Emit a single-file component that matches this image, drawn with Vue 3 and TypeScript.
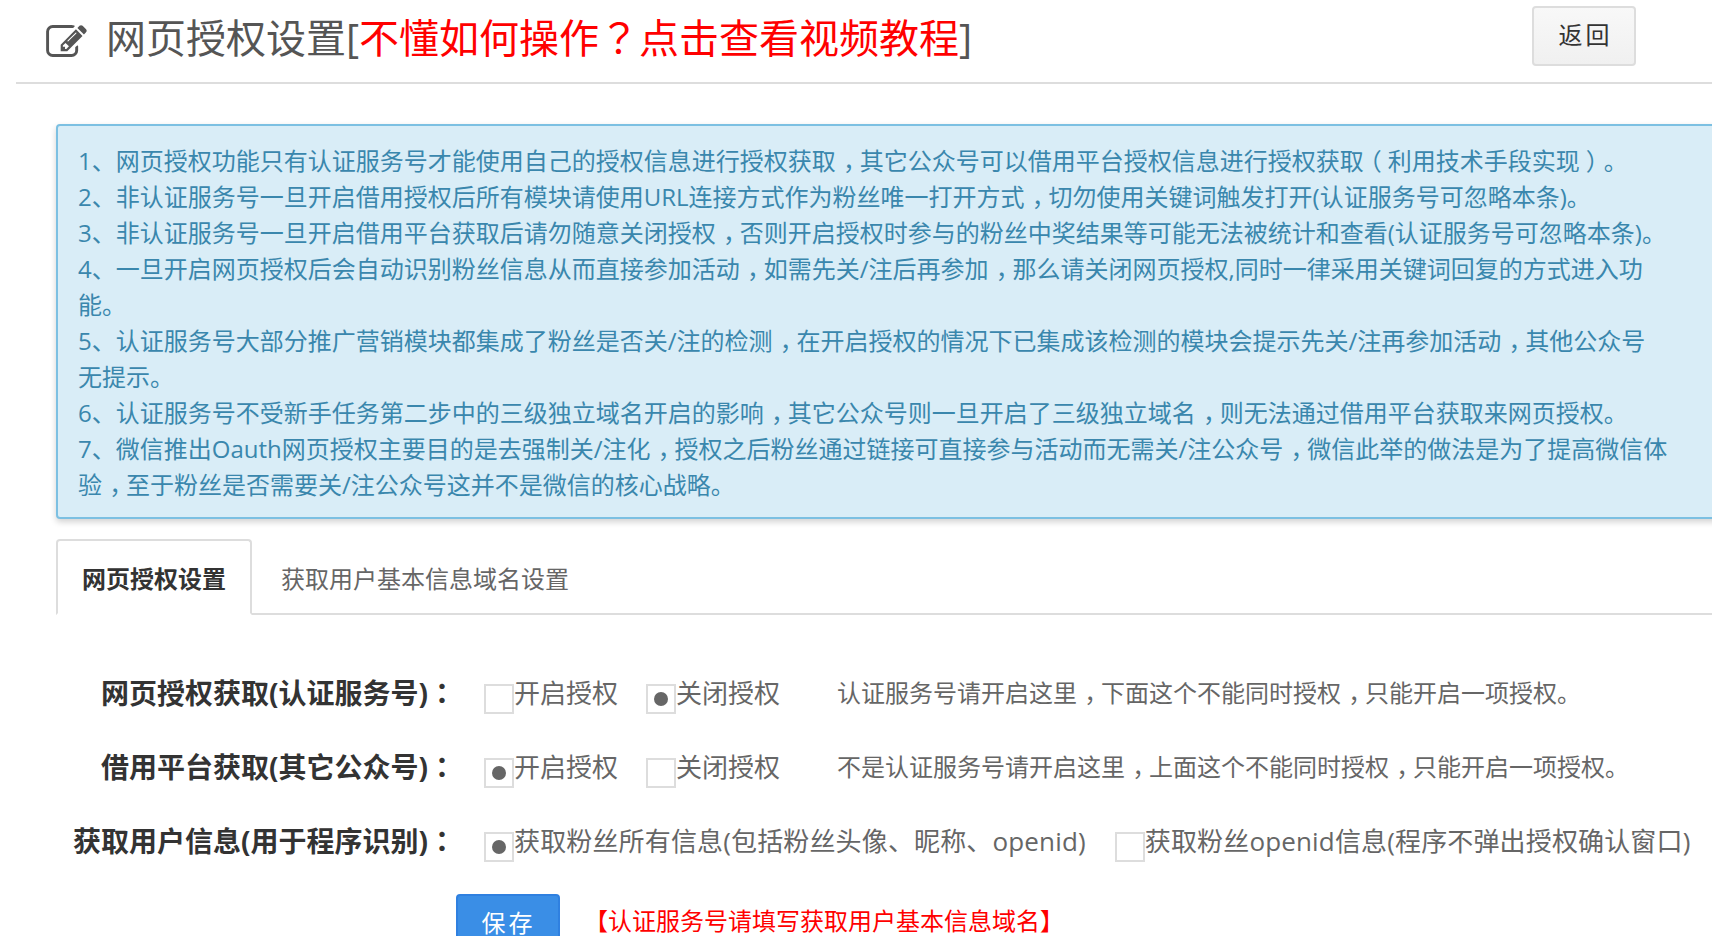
<script setup lang="ts">
interface Option { text: string; checked: boolean }
interface Row { label: string; options: Option[]; hint?: string; wide?: boolean }
interface Part { text: string; cls: string }

const glyphClass: Record<string, string> = {
  '，': 'fw comma',
  '？': 'fw',
  '（': 'fw open',
  '）': 'fw close',
  '：': 'fw'
}

const parts = (text: string): Part[] =>
  (text.match(/[，？（）：]|[^，？（）：]+/g) ?? []).map((t) => ({ text: t, cls: glyphClass[t] ?? '' }))

const notes: string[] = [
  '1、网页授权功能只有认证服务号才能使用自己的授权信息进行授权获取，其它公众号可以借用平台授权信息进行授权获取（利用技术手段实现）。',
  '2、非认证服务号一旦开启借用授权后所有模块请使用URL连接方式作为粉丝唯一打开方式，切勿使用关键词触发打开(认证服务号可忽略本条)。',
  '3、非认证服务号一旦开启借用平台获取后请勿随意关闭授权，否则开启授权时参与的粉丝中奖结果等可能无法被统计和查看(认证服务号可忽略本条)。',
  '4、一旦开启网页授权后会自动识别粉丝信息从而直接参加活动，如需先关/注后再参加，那么请关闭网页授权,同时一律采用关键词回复的方式进入功',
  '能。',
  '5、认证服务号大部分推广营销模块都集成了粉丝是否关/注的检测，在开启授权的情况下已集成该检测的模块会提示先关/注再参加活动，其他公众号',
  '无提示。',
  '6、认证服务号不受新手任务第二步中的三级独立域名开启的影响，其它公众号则一旦开启了三级独立域名，则无法通过借用平台获取来网页授权。',
  '7、微信推出Oauth网页授权主要目的是去强制关/注化，授权之后粉丝通过链接可直接参与活动而无需关/注公众号，微信此举的做法是为了提高微信体',
  '验，至于粉丝是否需要关/注公众号这并不是微信的核心战略。'
]

const rows: Row[] = [
  {
    label: '网页授权获取(认证服务号)：',
    options: [{ text: '开启授权', checked: false }, { text: '关闭授权', checked: true }],
    hint: '认证服务号请开启这里，下面这个不能同时授权，只能开启一项授权。'
  },
  {
    label: '借用平台获取(其它公众号)：',
    options: [{ text: '开启授权', checked: true }, { text: '关闭授权', checked: false }],
    hint: '不是认证服务号请开启这里，上面这个不能同时授权，只能开启一项授权。'
  },
  {
    label: '获取用户信息(用于程序识别)：',
    wide: true,
    options: [
      { text: '获取粉丝所有信息(包括粉丝头像、昵称、openid)', checked: true },
      { text: '获取粉丝openid信息(程序不弹出授权确认窗口)', checked: false }
    ]
  }
]
</script>

<template>
  <div class="page">
    <header class="head">
      <svg class="edit-icon" viewBox="0 128 1792 1408" aria-hidden="true">
        <path d="M888 1184l116-116-152-152-116 116v56h96v96h56zm440-720q-16-16-33 1l-350 350q-17 17-1 33t33-1l350-350q17-17 1-33zm80 594v190q0 119-84.5 203.5t-203.5 84.5h-832q-119 0-203.5-84.5t-84.5-203.5v-832q0-119 84.5-203.5t203.5-84.5h832q63 0 117 25 15 7 18 23 3 17-9 29l-49 49q-14 14-32 8-23-6-45-6h-832q-66 0-113 47t-47 113v832q0 66 47 113t113 47h832q66 0 113-47t47-113v-126q0-13 9-22l64-64q15-15 35-7t20 29zm-96-738l288 288-672 672h-288v-288zm444 132l-92 92-288-288 92-92q28-28 68-28t68 28l152 152q28 28 28 68t-28 68z" />
      </svg>
      <h1 class="title">网页授权设置[<span class="red">不懂如何操作<span class="fw">？</span>点击查看视频教程</span>]</h1>
      <button class="back" type="button">返回</button>
    </header>

    <section class="alert">
      <p v-for="note in notes" :key="note"><span v-for="(p, i) in parts(note)" :key="i" :class="p.cls">{{ p.text }}</span></p>
    </section>

    <nav class="tabs">
      <a class="tab active">网页授权设置</a>
      <a class="tab">获取用户基本信息域名设置</a>
    </nav>

    <form class="form" @submit.prevent>
      <div v-for="row in rows" :key="row.label" class="row">
        <label class="label"><span v-for="(p, i) in parts(row.label)" :key="i" :class="p.cls">{{ p.text }}</span></label>
        <div class="controls" :class="{ wide: row.wide }">
          <span v-for="opt in row.options" :key="opt.text" class="option">
            <i class="box" :class="{ on: opt.checked }"></i>{{ opt.text }}
          </span>
          <span v-if="row.hint" class="hint"><span v-for="(p, i) in parts(row.hint)" :key="i" :class="p.cls">{{ p.text }}</span></span>
        </div>
      </div>
      <div class="actions">
        <button class="save" type="button">保存</button>
        <span class="note">【认证服务号请填写获取用户基本信息域名】</span>
      </div>
    </form>
  </div>
</template>

<style scoped>
.page {
  width: 1712px;
  height: 936px;
  overflow: hidden;
  background: #fff;
  font-family: "Open Sans", "Noto Sans CJK SC", sans-serif;
  color: #666;
  text-spacing-trim: space-all;
}
.fw {
  font-family: "Noto Sans CJK KR", sans-serif;
  line-height: 1;
}
.comma { padding-left: 0.3em; letter-spacing: -0.3em; }
.close { padding-left: 0.25em; letter-spacing: -0.25em; }
.open { margin-left: -0.25em; padding-right: 0.25em; }
.head {
  display: flex;
  align-items: center;
  height: 76px;
  margin-left: 16px;
  padding: 0 76px 6px 30px;
  border-bottom: 2px solid #ddd;
}
.edit-icon {
  flex: none;
  width: 41px;
  height: 32px;
  fill: #555;
  margin-top: 6px;
}
.title {
  flex: 1;
  margin: 0 0 0 19px;
  font-size: 40px;
  font-weight: 400;
  line-height: 52px;
  color: #555;
}
.red { color: #f00; }
.back {
  align-self: flex-start;
  width: 104px;
  height: 60px;
  margin-top: 6px;
  padding: 0 0 6px 3px;
  border: 2px solid #ddd;
  border-radius: 4px;
  background: linear-gradient(#f8f8f8, #f0f0f0);
  font: inherit;
  font-size: 24px;
  letter-spacing: 3px;
  color: #333;
}
.alert {
  box-sizing: border-box;
  width: 1700px;
  margin: 40px 0 0 56px;
  padding: 17px 42px 14px 20px;
  border: 2px solid #7cc0e2;
  border-radius: 4px;
  background: #d9edf7;
  box-shadow: 0 3px 6px rgba(0, 0, 0, 0.18);
  font-size: 24px;
  line-height: 36px;
  color: #3a87ad;
}
.alert p { margin: 0; white-space: nowrap; }
.tabs {
  display: flex;
  height: 76px;
  margin: 20px 0 0 56px;
  box-sizing: border-box;
  border-bottom: 2px solid #ddd;
  font-size: 24px;
  line-height: 30px;
}
.tab {
  box-sizing: border-box;
  height: 76px;
  padding: 23px 24px 21px;
  margin-left: 3px;
  border: 2px solid transparent;
  color: #666;
}
.tab.active {
  margin-left: 0;
  border-color: #ddd #ddd #fff;
  border-radius: 4px 4px 0 0;
  background: #fff;
  font-weight: 700;
  color: #333;
}
.form { padding-top: 57px; }
.row {
  display: grid;
  grid-template-columns: 456px 1fr;
  margin-bottom: 32px;
  line-height: 42px;
}
.label {
  text-align: right;
  font-size: 28px;
  font-weight: 700;
  color: #333;
  white-space: nowrap;
}
.controls {
  display: flex;
  padding-left: 28px;
  font-size: 26px;
  white-space: nowrap;
}
.controls.wide { letter-spacing: 0.15px; }
.option {
  display: flex;
  margin-right: 28px;
}
.controls.wide .option { margin-right: 29px; }
.box {
  position: relative;
  flex: none;
  box-sizing: border-box;
  width: 30px;
  height: 30px;
  margin-top: 12px;
  border: 2px solid #ddd;
}
.box.on::after {
  content: "";
  position: absolute;
  left: 6px;
  top: 6px;
  width: 14px;
  height: 14px;
  border-radius: 50%;
  background: #666;
}
.hint {
  margin-left: 29px;
  font-size: 24px;
}
.actions {
  display: flex;
  margin-left: 456px;
}
.save {
  width: 104px;
  height: 54px;
  padding: 0 0 0 1px;
  border: 2px solid #2f80e0;
  border-radius: 4px;
  background: #3a8ee6;
  color: #fff;
  font: inherit;
  font-size: 24px;
  letter-spacing: 3px;
}
.note {
  margin-left: 24px;
  padding-top: 9px;
  font-size: 24px;
  line-height: 36px;
  color: #f00;
}
</style>

<style>
html, body { overflow: hidden; }
</style>
